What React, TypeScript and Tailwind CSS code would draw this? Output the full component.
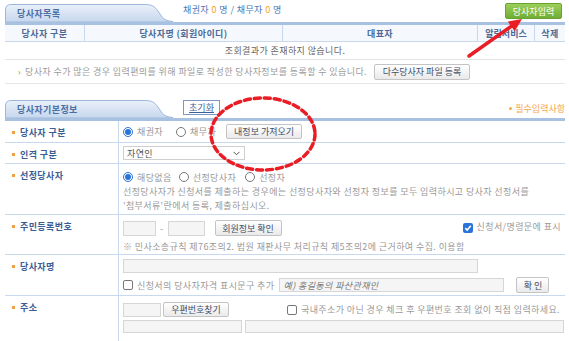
const Tab = ({ title }: { title: string }) => (
  <div className="relative w-[168px] h-[18px] shrink-0">
    <svg className="absolute inset-0" width="168" height="18" viewBox="0 0 168 18">
      <defs>
        <linearGradient id={`g-${title}`} x1="0" y1="0" x2="0" y2="1">
          <stop offset="0" stopColor="#eaf0f9" />
          <stop offset="1" stopColor="#c6d7ee" />
        </linearGradient>
      </defs>
      <path
        d="M0.5 18 V6 Q0.5 0.5 6 0.5 H140 C149 0.5 151 4 155 10 C158 15 161 17 168 17.5 V18 Z"
        fill={`url(#g-${title})`}
        stroke="#9db7da"
      />
    </svg>
    <span className="relative block pl-[12px] pt-[5px] text-[9px] font-bold text-[#4a6fa5]">{title}</span>
  </div>
);

const Radio = ({ checked }: { checked?: boolean }) =>
  checked ? (
    <span className="flex w-[10px] h-[10px] shrink-0 items-center justify-center rounded-full border border-[#2a74d8] bg-white">
      <span className="w-[6px] h-[6px] rounded-full bg-[#2a74d8]" />
    </span>
  ) : (
    <span className="w-[10px] h-[10px] shrink-0 rounded-full border border-[#777] bg-white" />
  );

const Check = ({ checked }: { checked?: boolean }) =>
  checked ? (
    <span className="flex w-[10px] h-[10px] shrink-0 items-center justify-center rounded-[2px] bg-[#2a74d8]">
      <svg width="8" height="8" viewBox="0 0 8 8">
        <path d="M1.3 4.2 L3.2 6 L6.8 1.8" fill="none" stroke="white" strokeWidth="1.6" />
      </svg>
    </span>
  ) : (
    <span className="w-[10px] h-[10px] shrink-0 rounded-[2px] border border-[#777] bg-white" />
  );

const Btn = ({ children, className = "" }: { children: React.ReactNode; className?: string }) => (
  <span
    className={`flex shrink-0 items-center justify-center whitespace-nowrap rounded-[2px] border border-[#c4c4c4] bg-linear-to-b from-white to-[#eaeaea] text-[9px] tracking-normal text-[#3f4f6a] ${className}`}
  >
    {children}
  </span>
);

const Input = ({ className = "" }: { className?: string }) => (
  <span className={`block shrink-0 border border-[#d6d6d6] bg-[#f5f5f5] ${className}`} />
);

const Label = ({ text }: { text: string }) => (
  <div className="w-[114px] shrink-0 border-r border-[#c8d8ee]">
    <div className="flex h-[22px] items-center pl-[7px]">
      <span className="w-[3px] h-[3px] bg-[#f0a040]" />
      <span className="ml-[5px] font-bold text-[#3b5d96]">{text}</span>
    </div>
  </div>
);

export default function App() {
  return (
    <div className="relative w-[569px] h-[341px] overflow-hidden bg-white font-['Noto_Sans_CJK_KR',sans-serif] text-[9px] leading-none tracking-[0.4px] whitespace-nowrap">
      <div className="w-[560px] ml-[5px] pt-[4px]">
        {/* 당사자목록 */}
        <div className="flex h-[18px] items-end">
          <Tab title="당사자목록" />
          <div className="self-start mt-[1px] ml-[10px] text-[#4a78b8]">
            채권자 <span className="text-[#f5a020]">0</span> 명 / 채무자 <span className="text-[#f5a020]">0</span> 명
          </div>
          <div className="flex-1" />
          <span className="-mt-[1px] mr-[3px] self-start flex h-[16px] w-[57px] items-center justify-center rounded-[2px] border border-[#6aa133] bg-linear-to-b from-[#9ccf5a] to-[#6fae34] tracking-normal text-white">
            당사자입력
          </span>
        </div>
        <div className="h-[3px] bg-[#a9c1e0]" />
        <div className="flex h-[17px] border-b border-[#c9d8ec] bg-[#f5f8fc] font-bold text-[#4d6a96]">
          <div className="flex w-[80px] items-center justify-center border-r border-[#c9d8ec]">당사자 구분</div>
          <div className="flex w-[198px] items-center justify-center border-r border-[#c9d8ec]">당사자명 (회원아이디)</div>
          <div className="flex w-[195px] items-center justify-center border-r border-[#c9d8ec]">대표자</div>
          <div className="flex w-[57px] items-center justify-center overflow-hidden border-r border-[#c9d8ec] tracking-normal">알림서비스</div>
          <div className="flex flex-1 items-center justify-center">삭제</div>
        </div>
        <div className="flex h-[18px] items-center justify-center border-b border-[#e2e2e2] text-[#666]">
          조회결과가 존재하지 않습니다.
        </div>
        <div className="flex h-[24px] items-center border-b border-[#e6e6e6] pl-[13px]">
          <span className="text-[8px] font-bold text-[#9bb02a]">›</span>
          <span className="ml-[4px] text-[#9a9a9a]">
            당사자 수가 많은 경우 입력편의를 위해 파일로 작성한 당사자정보를 등록할 수 있습니다.
          </span>
          <Btn className="ml-[7px] h-[16px] w-[96px]">다수당사자 파일 등록</Btn>
        </div>

        {/* 당사자기본정보 */}
        <div className="mt-[16px] flex h-[18px] items-end">
          <Tab title="당사자기본정보" />
          <span className="ml-[10px] self-start flex h-[15px] w-[37px] items-center justify-center border border-[#7d97c2] bg-white tracking-normal text-[#3d5f99] underline">
            초기화
          </span>
          <div className="flex-1" />
          <div className="self-start mt-[4px] flex h-[9px] w-[60px] items-center justify-end tracking-normal text-[#f5a64a]">
            <span className="w-[3px] h-[3px] shrink-0 rounded-full bg-[#f5a64a]" />
            <span className="ml-[3px]">필수입력사항</span>
          </div>
        </div>
        <div className="h-[3px] bg-[#a9c1e0]" />

        <div className="flex h-[22px] border-b border-[#c8d8ee]">
          <Label text="당사자 구분" />
          <div className="flex items-center pl-[4px] text-[#999]">
            <Radio checked />
            <span className="ml-[4px]">채권자</span>
            <span className="ml-[13px]" />
            <Radio />
            <span className="ml-[4px]">채무자</span>
            <Btn className="ml-[10px] h-[15px] w-[76px]">내정보 가져오기</Btn>
          </div>
        </div>

        <div className="flex h-[21px] border-b border-[#c8d8ee]">
          <Label text="인격 구분" />
          <div className="flex items-center pl-[4px]">
            <span className="flex h-[14px] w-[122px] items-center justify-between border border-[#cfcfcf] bg-white pl-[3px] pr-[4px] text-[#555]">
              자연인
              <svg width="7" height="5" viewBox="0 0 7 5">
                <path d="M0.5 0.8 L3.5 3.8 L6.5 0.8" fill="none" stroke="#555" strokeWidth="1" />
              </svg>
            </span>
          </div>
        </div>

        <div className="flex h-[51px] border-b border-[#c8d8ee]">
          <Label text="선정당사자" />
          <div className="pl-[4px] pt-[7px] text-[#999]">
            <div className="flex h-[12px] items-center">
              <Radio checked />
              <span className="ml-[4px]">해당없음</span>
              <span className="ml-[7px]" />
              <Radio />
              <span className="ml-[4px]">선정당사자</span>
              <span className="ml-[9px]" />
              <Radio />
              <span className="ml-[4px]">선정자</span>
            </div>
            <div className="mt-[2px] leading-[14px]">
              선정당사자가 신청서를 제출하는 경우에는 선정당사자와 선정자 정보를 모두 입력하시고 당사자 선정서를
              <br />
              '첨부서류'란에서 등록, 제출하십시오.
            </div>
          </div>
        </div>

        <div className="flex h-[40px] border-b border-[#c8d8ee]">
          <Label text="주민등록번호" />
          <div className="flex-1 pl-[4px] pr-[4px] pt-[5px] text-[#999]">
            <div className="flex h-[16px] items-center">
              <Input className="h-[15px] w-[33px]" />
              <span className="mx-[4px]">-</span>
              <Input className="h-[15px] w-[37px]" />
              <Btn className="ml-[10px] h-[16px] w-[67px]">회원정보 확인</Btn>
              <div className="flex-1" />
              <Check checked />
              <span className="ml-[4px] -mt-[3px]">신청서/명령문에 표시</span>
            </div>
            <div className="mt-[6px]">※ 민사소송규칙 제76조의2. 법원 재판사무 처리규칙 제5조의2에 근거하여 수집. 이용함</div>
          </div>
        </div>

        <div className="flex h-[41px] border-b border-[#c8d8ee]">
          <Label text="당사자명" />
          <div className="flex-1 pl-[4px] pt-[4px] text-[#999]">
            <Input className="h-[14px] w-[355px]" />
            <div className="mt-[4px] flex h-[16px] items-center">
              <Check />
              <span className="ml-[4px]">신청서의 당사자자격 표시문구 추가</span>
              <span className="ml-[5px] flex h-[14px] w-[225px] shrink-0 items-center border border-[#d6d6d6] bg-[#f5f5f5] pl-[3px] italic text-[#777]">
                예) 홍길동의 파산관재인
              </span>
              <Btn className="ml-[12px] h-[16px] w-[33px]">확 인</Btn>
            </div>
          </div>
        </div>

        <div className="flex h-[50px]">
          <Label text="주소" />
          <div className="flex-1 pl-[4px] pr-[1px] pt-[6px] text-[#999]">
            <div className="flex h-[15px] items-center">
              <Input className="h-[14px] w-[38px]" />
              <Btn className="ml-[2px] h-[15px] w-[66px]">우편번호찾기</Btn>
              <span className="ml-[58px]" />
              <Check />
              <span className="ml-[4px]">국내주소가 아닌 경우 체크 후 우편번호 조회 없이 직접 입력하세요.</span>
            </div>
            <div className="mt-[3px] flex h-[13px]">
              <Input className="h-[13px] w-[119px]" />
              <Input className="ml-[3px] h-[13px] flex-1" />
            </div>
          </div>
        </div>
      </div>

      {/* annotations */}
      <svg className="pointer-events-none absolute left-0 top-0" width="569" height="341" viewBox="0 0 569 341">
        <ellipse
          cx="263"
          cy="134"
          rx="52"
          ry="36"
          fill="none"
          stroke="#ea1c24"
          strokeWidth="3.5"
          strokeDasharray="6 4"
          strokeLinecap="round"
        />
        <line x1="469" y1="56" x2="513" y2="25" stroke="#ea1c24" strokeWidth="3.5" strokeLinecap="round" />
        <polygon points="522,19 514.7,31.3 507.9,21.5" fill="#ea1c24" />
      </svg>
    </div>
  );
}
